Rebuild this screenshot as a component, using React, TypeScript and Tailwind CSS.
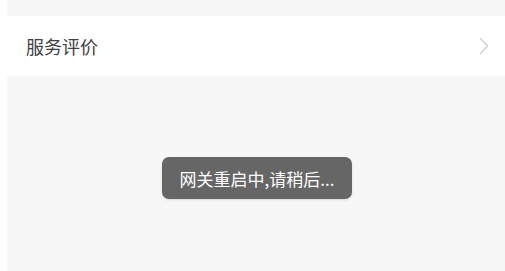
export default function App() {
  return (
    <div
      className="w-[505px] h-[271px] bg-white pl-[7px] flex flex-col overflow-hidden"
      style={{ fontFamily: '"Noto Sans CJK SC", "Noto Sans", sans-serif' }}
    >
      <div className="h-[16px] bg-[#f7f7f7]" />

      <div className="h-[60px] bg-white flex items-center justify-between pl-[19px] pr-[16px]">
        <span className="text-[18px] leading-none text-[#404040]">服务评价</span>
        <svg width="10" height="18" viewBox="0 0 10 18" fill="none">
          <path
            d="M1.5 1.5 L8.5 9 L1.5 16.5"
            stroke="#cfcfcf"
            strokeWidth="1.3"
            strokeLinecap="round"
            strokeLinejoin="round"
          />
        </svg>
      </div>

      <div className="flex-1 bg-[#f7f7f7] flex justify-center pt-[81px]">
        <div className="w-[190px] h-[42px] rounded-[7px] bg-[#666666] shadow-sm flex items-center justify-center ml-[2px]">
          <span className="text-[17px] leading-none text-white">
            网关重启中,请稍后...
          </span>
        </div>
      </div>
    </div>
  );
}
